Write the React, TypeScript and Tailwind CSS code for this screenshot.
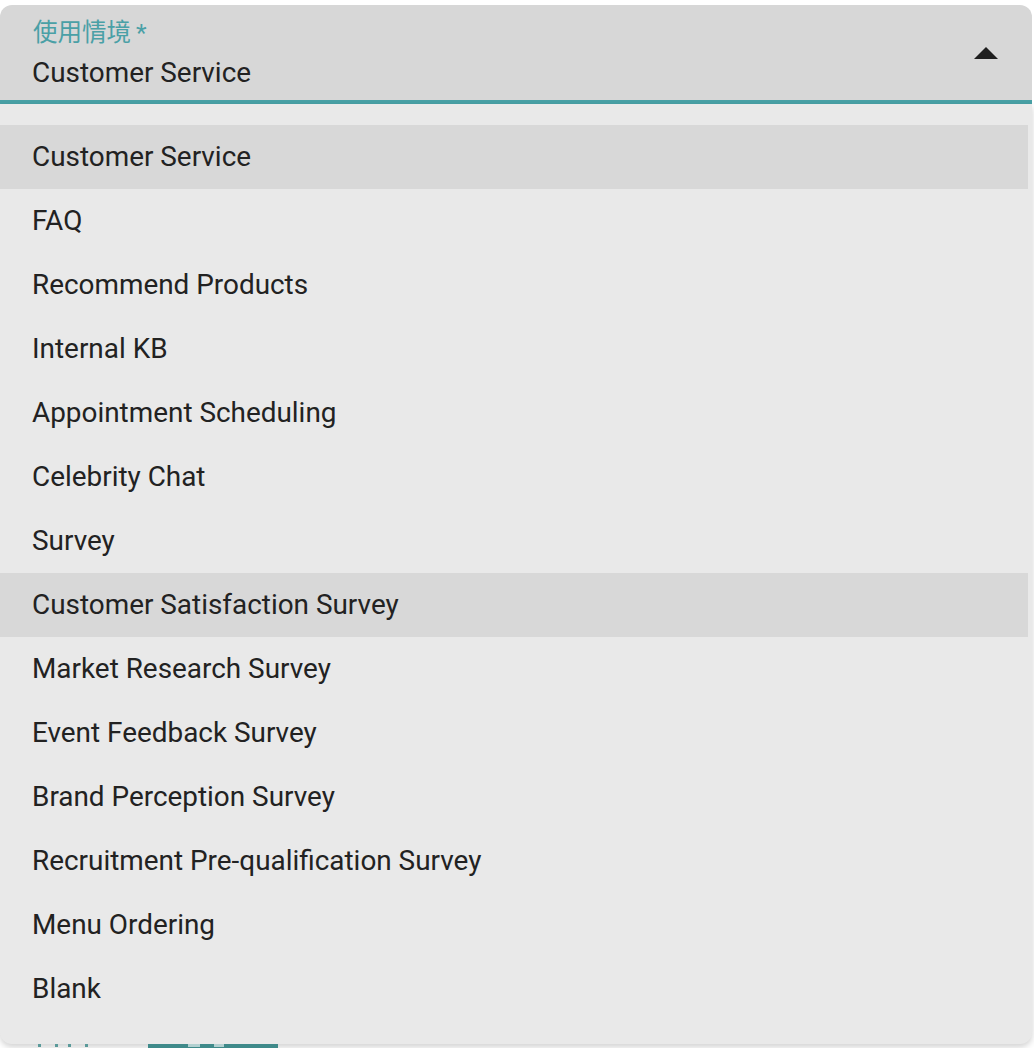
import React, { useState } from 'react';

const OPTIONS: string[] = [
  'Customer Service',
  'FAQ',
  'Recommend Products',
  'Internal KB',
  'Appointment Scheduling',
  'Celebrity Chat',
  'Survey',
  'Customer Satisfaction Survey',
  'Market Research Survey',
  'Event Feedback Survey',
  'Brand Perception Survey',
  'Recruitment Pre-qualification Survey',
  'Menu Ordering',
  'Blank',
];

const font = "font-['Roboto','Noto_Sans_CJK_TC',sans-serif]";

const App = () => {
  const [selected, setSelected] = useState<string>('Customer Service');
  const [hovered, setHovered] = useState<string>('Customer Satisfaction Survey');

  return (
    <div className={`h-[1048px] w-[1034px] overflow-hidden bg-white pt-[5px] ${font}`}>
      {/* select field */}
      <div className="flex w-[1032px] items-center rounded-t-[12px] border-b-4 border-[#48a0a5] bg-[#d7d7d7] pr-[34px] pl-[32px] pt-[14px] pb-[10px]">
        <div className="flex flex-1 flex-col gap-[9px]">
          <span className="pl-[1px] text-[24.5px] leading-[28px] text-[#4aa0a6]">使用情境{'\u2009'}*</span>
          <span className="text-[27.9px] leading-[34px] text-[#222]">{selected}</span>
        </div>
        <svg width="24" height="12" viewBox="0 0 24 12" className="mb-[4px]">
          <path d="M0 12 L12 0 L24 12 Z" fill="#1f1f1f" />
        </svg>
      </div>

      {/* dropdown menu */}
      <div className="w-[1032px] rounded-b-[12px] bg-[#e9e9e9] pt-[21px] pb-[23px] shadow-[0_3px_6px_rgba(0,0,0,0.18)]">
        <ul className="mr-[4px]">
          {OPTIONS.map((option: string) => {
            const active = option === selected || option === hovered;
            return (
              <li
                key={option}
                onClick={() => setSelected(option)}
                onMouseEnter={() => setHovered(option)}
                className={`flex h-16 cursor-pointer items-center pl-[32px] text-[27.9px] text-[#222] ${active ? 'bg-[#d8d8d8]' : ''}`}
              >
                {option}
              </li>
            );
          })}
        </ul>
      </div>

      {/* content peeking out under the menu */}
      <div className="flex h-[8px] items-start pl-[38px]">
        <div className="h-[3px] w-[20px] border-x-[3px] border-[#5a9a9a]" />
        <div className="ml-[10px] h-[3px] w-[20px] border-x-[3px] border-[#5a9a9a]" />
        <div className="ml-[60px] flex h-[4px] w-[130px] gap-[14px] bg-[#3f8a8a] pl-[40px]">
          <div className="h-[3px] w-[12px] bg-white/60" />
          <div className="h-[3px] w-[10px] bg-white/60" />
        </div>
      </div>
    </div>
  );
};

export default App;
